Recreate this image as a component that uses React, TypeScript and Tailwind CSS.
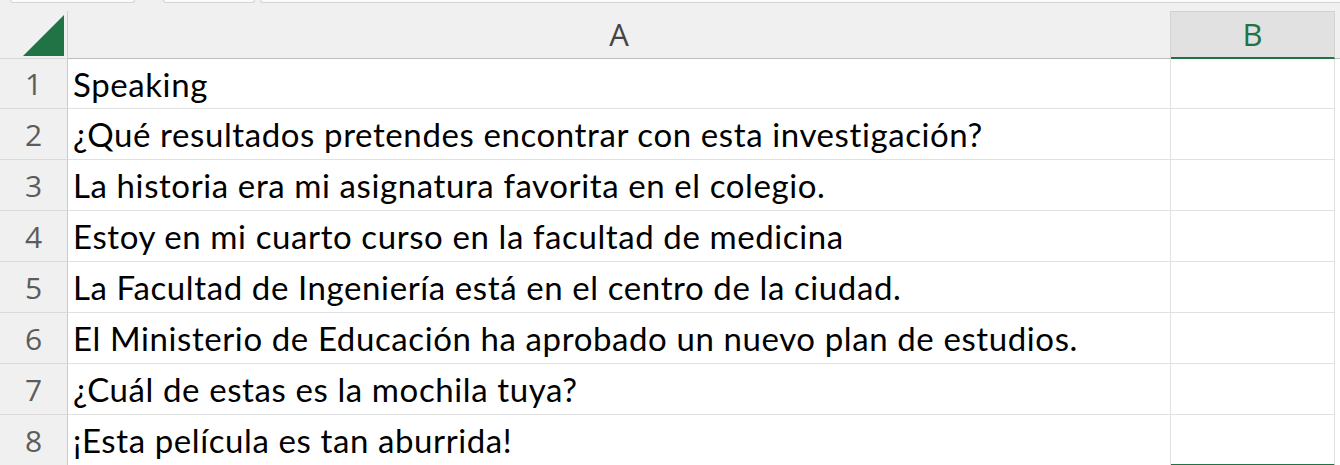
const rows = [
  'Speaking',
  '¿Qué resultados pretendes encontrar con esta investigación?',
  'La historia era mi asignatura favorita en el colegio.',
  'Estoy en mi cuarto curso en la facultad de medicina',
  'La Facultad de Ingeniería está en el centro de la ciudad.',
  'El Ministerio de Educación ha aprobado un nuevo plan de estudios.',
  '¿Cuál de estas es la mochila tuya?',
  '¡Esta película es tan aburrida!',
];

export default function App() {
  return (
    <div className="w-[1340px] h-[465px] overflow-hidden bg-white font-['Lato',sans-serif]">
      {/* sheet tabs strip */}
      <div className="h-[11px] bg-[#f0f0f0] flex items-start">
        <div className="ml-[10px] w-[125px] h-[3px] bg-[#fbfbfb] border border-t-0 border-[#d4d4d4] rounded-b-[4px]" />
        <div className="ml-[28px] w-[92px] h-[3px] bg-[#fbfbfb] border border-t-0 border-[#d4d4d4] rounded-b-[4px]" />
        <div className="ml-[5px] flex-1 h-[3px] bg-[#fbfbfb] border border-t-0 border-r-0 border-[#d4d4d4] rounded-bl-[4px]" />
      </div>

      {/* column headers */}
      <div className="flex h-[48px] bg-[#f0f0f0]">
        <div className="w-[68px] shrink-0 border-r border-[#d0d0d0] border-b border-b-[#d6d6d6] relative">
          <svg className="absolute left-[23px] top-[4px]" width="41" height="41" viewBox="0 0 41 41">
            <polygon points="0,41 41,41 41,0" fill="#217346" />
          </svg>
        </div>
        <div className="w-[1103px] shrink-0 border-r border-[#d4d4d4] border-b border-b-[#bdbdbd] flex items-center justify-center text-[31px] text-[#444] font-['Open_Sans',sans-serif]">
          A
        </div>
        <div className="w-[164px] shrink-0 bg-[#e1e1e1] border-t border-t-[#d0d0d0] border-r border-r-[#d4d4d4] border-b-2 border-b-[#217346] flex items-center justify-center text-[31px] text-[#217346] font-['Open_Sans',sans-serif]">
          B
        </div>
        <div className="flex-1 border-b border-[#bdbdbd]" />
      </div>

      {/* rows */}
      {rows.map((text, i) => (
        <div key={i} className={`flex ${i === 0 ? 'h-[50px]' : 'h-[51px]'}`}>
          <div className="w-[68px] shrink-0 bg-[#f0f0f0] border-r border-[#cbcbcb] border-b border-b-[#dadada] flex items-center justify-center text-[30px] text-[#5c5c5c] font-['Open_Sans',sans-serif]">
            {i + 1}
          </div>
          <div className="w-[1103px] shrink-0 border-r border-b border-[#e1e1e1] flex items-center pl-[5px] pt-[2px] text-[33px] tracking-[0.6px] [font-variant-ligatures:none] text-black whitespace-nowrap">
            {text}
          </div>
          <div
            className={`w-[164px] shrink-0 border-r border-[#e1e1e1] ${
              i === rows.length - 1 ? 'border-b-2 border-b-[#217346]' : 'border-b border-b-[#e1e1e1]'
            }`}
          />
          <div className="flex-1" />
        </div>
      ))}
    </div>
  );
}
